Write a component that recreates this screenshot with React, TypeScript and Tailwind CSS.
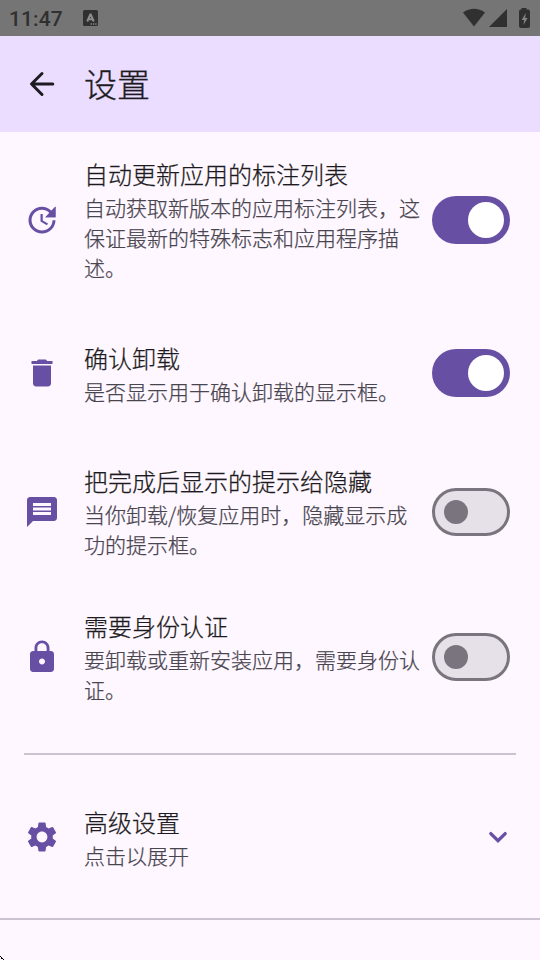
import { ReactNode } from "react";
import { MdDelete, MdLock, MdMessage, MdSettings } from "react-icons/md";

interface RowProps {
    icon: ReactNode;
    title: string;
    description: string;
    height: string;
    children: ReactNode;
}

const StatusBar = () => (
    <div className="flex h-9 items-center bg-[#757575] pl-[9px] text-[#303030]">
        <span className="w-[74px] pt-px font-[Roboto,sans-serif] text-[21px] leading-9 font-medium tracking-[0.1px]">11:47</span>
        <svg width="15" height="16" viewBox="0 0 15 16">
            <rect width="15" height="16" rx="1.5" fill="#303030" />
            <path d="M4.200 11.500 7.500 4l3.300 7.500M5.300 9.300h4.400" fill="none" stroke="#8c8c8c" strokeWidth="2" strokeLinejoin="bevel" />
            <path d="M7.700 14h1.300M10 14h1.300M12.300 14h1.300" stroke="#8c8c8c" strokeWidth="1.300" />
        </svg>
        <svg width="68" height="20" viewBox="0 0 68 20" className="mr-[9px] ml-auto" fill="#303030">
            <path d="M0 4.500Q11-3 22 4.500L11 18.500Z" />
            <path d="M26 19 44 1V19Z" />
            <path d="M58.500 0h5v1.500H65q2 0 2 2V18q0 2-2 2h-7q-2 0-2-2V3.500q0-2 2-2h.5Z" />
            <path d="M62.800 5 58.700 12h2.500l-.8 5 4.200-7h-2.500Z" fill="#858585" />
        </svg>
    </div>
)

const UpdateIcon = () => (
    <svg width="1em" height="1em" viewBox="0 0 24 24" fill="currentColor">
        <path d="M21 10.120h-6.780l2.740-2.820c-2.730-2.700-7.150-2.800-9.880-.1-2.730 2.710-2.730 7.080 0 9.790s7.150 2.710 9.880 0C18.320 15.650 19 14.080 19 12.100h2c0 1.980-.88 4.550-2.640 6.290-3.510 3.480-9.210 3.480-12.720 0-3.500-3.470-3.530-9.110-.02-12.580s9.140-3.470 12.650 0L21 3v7.120zM12.500 8v4.250l3.500 2.080-.72 1.210L11 13V8h1.500z" />
        <path d="M14.220 10.120 21 3v7.120z" />
    </svg>
)

const Switch = ({ checked = false }: { checked?: boolean }) => {
    if (checked) return (
        <button role="switch" aria-checked="true" className="flex h-12 w-[78px] shrink-0 items-center justify-end rounded-full bg-[#6750a4] pr-1.5">
            <span className="size-9 rounded-full bg-white" />
        </button>
    )
    return (
        <button role="switch" aria-checked="false" className="flex h-12 w-[78px] shrink-0 items-center rounded-full border-3 border-[#79747e] bg-[#e6e0e9] pl-[9px]">
            <span className="size-6 rounded-full bg-[#79747e]" />
        </button>
    )
}

const Row = ({ icon, title, description, height, children }: RowProps) => (
    <div className={`flex items-center pr-[30px] pl-6 ${height}`}>
        <div className="mr-6 shrink-0 text-[36px] text-[#6750a4]">{icon}</div>
        <div className={`mr-3 w-[336px] shrink-0 ${description.length > 16 ? "pb-0.5" : ""}`}>
            <h2 className="text-2xl leading-9 text-[#1d1b20] [-webkit-text-stroke:0.25px]">{title}</h2>
            <p className="text-[21px] leading-[30px] text-[#49454f] [-webkit-text-stroke:0.25px]">{description}</p>
        </div>
        {children}
    </div>
)

export default function App() {
    return (
        <div className="relative h-[960px] w-[540px] overflow-hidden bg-[#fef7ff] font-['Noto_Sans_CJK_SC',sans-serif] font-light">
            <StatusBar />
            <header className="flex h-24 items-center bg-[#eaddff] pl-6 text-[#1d1b20]">
                <svg width="36" height="36" viewBox="0 0 24 24" className="mr-6" fill="none" stroke="currentColor" strokeWidth="2" strokeLinecap="round" strokeLinejoin="round">
                    <path d="M19.200 12H5.200M12 5l-7 7 7 7" />
                </svg>
                <h1 className="pb-0.5 text-[33px] leading-[42px] [-webkit-text-stroke:0.3px]">设置</h1>
            </header>
            <main>
                <Row icon={<UpdateIcon />} title="自动更新应用的标注列表" description="自动获取新版本的应用标注列表，这保证最新的特殊标志和应用程序描述。" height="h-44">
                    <Switch checked />
                </Row>
                <Row icon={<MdDelete />} title="确认卸载" description="是否显示用于确认卸载的显示框。" height="h-[130px]">
                    <Switch checked />
                </Row>
                <Row icon={<MdMessage />} title="把完成后显示的提示给隐藏" description="当你卸载/恢复应用时，隐藏显示成功的提示框。" height="h-[148px]">
                    <Switch />
                </Row>
                <Row icon={<MdLock />} title="需要身份认证" description="要卸载或重新安装应用，需要身份认证。" height="h-[142px]">
                    <Switch />
                </Row>
                <div className="mx-6 mt-[25px] h-0.5 bg-[#cac4d0]" />
                <Row icon={<MdSettings />} title="高级设置" description="点击以展开" height="h-[163px]">
                    <svg width="36" height="36" viewBox="0 0 24 24" className="ml-12 shrink-0 text-[#6750a4]" fill="none" stroke="currentColor" strokeWidth="2.200" strokeLinecap="round">
                        <path d="m7.200 9.700 4.800 4.800 4.800-4.800" />
                    </svg>
                </Row>
                <div className="h-0.5 bg-[#cac4d0]" />
            </main>
            <svg width="4" height="4" viewBox="0 0 4 4" className="absolute bottom-0 left-0" shapeRendering="crispEdges">
                <path d="M0 0h1v1H0zM1 1h1v1H1zM1 2h1v1H1zM2 2h1v1H2zM3 3h1v1H3z" />
            </svg>
        </div>
    )
}
